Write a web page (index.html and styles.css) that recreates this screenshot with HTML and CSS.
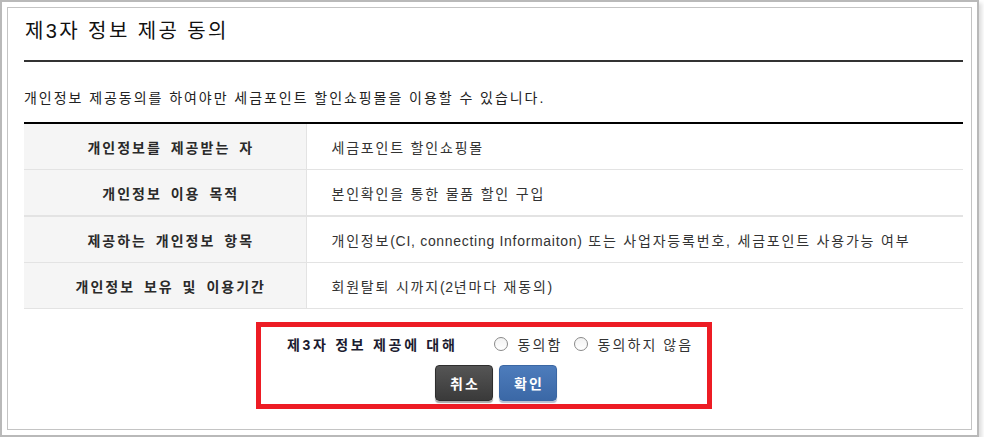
FILE: index.html
```html
<!DOCTYPE html>
<html lang="ko">
<head>
<meta charset="utf-8">
<title>제3자 정보 제공 동의</title>
<link rel="stylesheet" href="styles.css">
</head>
<body>
<div class="frame">
  <div class="inner">
    <h2 class="title">제3자 정보 제공 동의</h2>
    <p class="desc">개인정보 제공동의를 하여야만 세금포인트 할인쇼핑몰을 이용할 수 있습니다.</p>
    <table class="info">
      <tr>
        <th>개인정보를 제공받는 자</th>
        <td>세금포인트 할인쇼핑몰</td>
      </tr>
      <tr class="thick">
        <th>개인정보 이용 목적</th>
        <td>본인확인을 통한 물품 할인 구입</td>
      </tr>
      <tr>
        <th>제공하는 개인정보 항목</th>
        <td>개인정보<span class="en">(CI, connecting Informaiton)</span> 또는 사업자등록번호, 세금포인트 사용가능 여부</td>
      </tr>
      <tr>
        <th>개인정보 보유 및 이용기간</th>
        <td>회원탈퇴 시까지<span class="en">(2</span>년마다 재동의<span class="en">)</span></td>
      </tr>
    </table>
    <div class="agree">
      <div class="agree-row">
        <span class="agree-label">제3자 정보 제공에 대해</span>
        <label class="opt"><input type="radio" name="agree" class="radio"><span>동의함</span></label>
        <label class="opt"><input type="radio" name="agree" class="radio"><span>동의하지 않음</span></label>
      </div>
      <div class="btn-row">
        <button class="btn btn-cancel">취소</button>
        <button class="btn btn-ok">확인</button>
      </div>
    </div>
  </div>
</div>
</body>
</html>
```
FILE: styles.css
```css
* { box-sizing: border-box; }
html, body { margin: 0; padding: 0; background: #fff; }
body {
  font-family: "Liberation Sans", "Noto Sans CJK KR", sans-serif;
  color: #333;
}
.frame {
  width: 979px;
  height: 437px;
  border: 2px solid #b9b9b9;
  padding: 5px;
  background: #fff;
  box-shadow: 3px 3px 4px rgba(0, 0, 0, 0.13);
}
.inner {
  height: 100%;
  border: 1px solid #c4c4c4;
  padding: 0 8px 0 16px;
}
.title {
  margin: 0;
  padding: 11px 0 17px 1px;
  font-size: 20px;
  line-height: 24px;
  font-weight: normal;
  letter-spacing: 2.4px;
  color: #111;
  border-bottom: 2px solid #333;
}
.desc {
  margin: 28px 0 16px;
  font-size: 14px;
  line-height: 16px;
  letter-spacing: 1.95px;
  color: #222;
}
.info {
  width: 100%;
  border-collapse: collapse;
  border-top: 2px solid #000;
}
.info th, .info td {
  height: 46px;
  border-bottom: 1px solid #e3e3e3;
  font-size: 14px;
  line-height: 16px;
  padding: 3px 0 0;
}
.info tr.thick th, .info tr.thick td { border-bottom: 2px solid #e3e3e3; height: 47px; }
.info th {
  width: 282px;
  background: #f5f5f5;
  border-right: 1px solid #e3e3e3;
  font-weight: bold;
  color: #2a2a2a;
  text-align: center;
  padding-left: 12px;
  letter-spacing: 2px;
  word-spacing: 3px;
}
.info td {
  padding-left: 25px;
  color: #333;
  letter-spacing: 1.8px;
}
.info td .en { letter-spacing: 0.7px; }
.agree {
  margin: 13px 0 0 232px;
  width: 456px;
  height: 87px;
  border: 5px solid #ed1c24;
}
.agree-row {
  display: flex;
  align-items: center;
  height: 33px;
  padding: 2px 0 0 26px;
}
.agree-label {
  font-size: 14px;
  font-weight: bold;
  color: #1c1c30;
  letter-spacing: 2.7px;
  margin-right: 37px;
}
.opt {
  display: flex;
  align-items: center;
  font-size: 14px;
  color: #333;
  letter-spacing: 2.1px;
  margin-right: 12px;
}
.radio {
  appearance: none;
  -webkit-appearance: none;
  width: 14px;
  height: 14px;
  margin: 0 9px 0 0;
  border: 1px solid #8a8a8a;
  border-radius: 50%;
  background: linear-gradient(#f2f2f2, #ffffff);
}
.btn-row {
  display: flex;
  justify-content: center;
  gap: 6px;
  padding-left: 24px;
  padding-top: 5px;
}
.btn {
  width: 58px;
  height: 36px;
  border-radius: 4px;
  font-family: "Liberation Sans", "Noto Sans CJK KR", sans-serif;
  font-size: 14px;
  font-weight: bold;
  color: #fff;
  letter-spacing: 2px;
  padding: 0 0 0 2px;
  cursor: pointer;
}
.btn-cancel {
  background: linear-gradient(#555, #3a3a3a);
  border: 1px solid #2e2e2e;
  box-shadow: 0 2px 1px rgba(0, 0, 0, 0.35);
}
.btn-ok {
  background: linear-gradient(#4d7cbc, #3b68a6);
  border: 1px solid #3b67a3;
  box-shadow: 0 2px 1px rgba(40, 70, 120, 0.35);
}
```
